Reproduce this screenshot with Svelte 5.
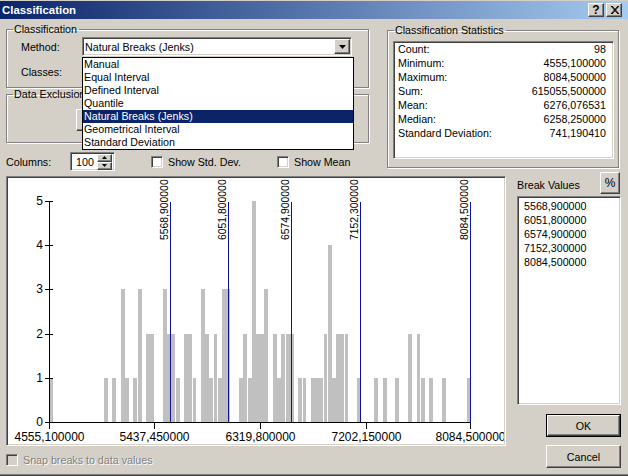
<script lang="ts">
	const methods = [
		'Manual',
		'Equal Interval',
		'Defined Interval',
		'Quantile',
		'Natural Breaks (Jenks)',
		'Geometrical Interval',
		'Standard Deviation'
	];
	const selected = 'Natural Breaks (Jenks)';

	const stats = [
		['Count:', '98'],
		['Minimum:', '4555,100000'],
		['Maximum:', '8084,500000'],
		['Sum:', '615055,500000'],
		['Mean:', '6276,076531'],
		['Median:', '6258,250000'],
		['Standard Deviation:', '741,190410']
	];

	const breaks = [
		{ label: '5568,900000', x: 170.5 },
		{ label: '6051,800000', x: 228.5 },
		{ label: '6574,900000', x: 291.5 },
		{ label: '7152,300000', x: 360.5 },
		{ label: '8084,500000', x: 470.5 }
	];

	const ticksX = [
		{ label: '4555,100000', x: 49.5 },
		{ label: '5437,450000', x: 154.5 },
		{ label: '6319,800000', x: 260.5 },
		{ label: '7202,150000', x: 366.5 },
		{ label: '8084,500000', x: 470.5 }
	];

	// [from x, to x, count] read off the histogram
	const bars = [
		[50, 53, 1], [104, 108, 1], [112, 116, 1], [121, 125, 3], [125, 129, 1], [133, 137, 1],
		[138, 142, 3], [146, 154, 2], [163, 167, 3], [167, 175, 2], [176, 180, 1], [184, 192, 2],
		[193, 196, 1], [201, 205, 3], [205, 209, 2], [209, 213, 1], [214, 217, 2], [218, 222, 1],
		[222, 230, 3], [239, 243, 1], [243, 247, 2], [248, 252, 1], [252, 256, 5], [256, 264, 2],
		[264, 268, 3], [273, 277, 2], [277, 281, 1], [281, 285, 2], [286, 294, 2], [298, 302, 1],
		[303, 306, 1], [311, 323, 1], [324, 327, 2], [328, 332, 4], [332, 336, 1], [336, 344, 2],
		[345, 348, 2], [357, 360, 1], [374, 378, 1], [383, 387, 1], [395, 399, 1], [408, 412, 2],
		[417, 420, 2], [421, 425, 1], [429, 433, 1], [442, 446, 1], [467, 471, 1]
	];

	const baseY = 422;
	const yFor = (n: number) => Math.round(baseY - n * 44.2);
</script>

<div class="window">
	<div class="titlebar">
		<span class="title">Classification</span>
		<div class="caption-buttons">
			<button class="caption-btn raised help">?</button>
			<button class="caption-btn raised" aria-label="Close">
				<svg width="9" height="8" viewBox="0 0 9 8">
					<path d="M1 0 L8 8 M2 0 L9 8 M8 0 L1 8 M9 0 L2 8" stroke="#000" stroke-width="1" />
				</svg>
			</button>
		</div>
	</div>

	<div class="content">
		<div class="top">
			<div class="top-left">
				<fieldset class="group class-group">
					<legend>Classification</legend>
					<div class="field">
						<span class="field-label">Method:</span>
						<div class="combo sunken">
							<span>{selected}</span>
							<span class="combo-arrow raised">
								<svg width="7" height="4" viewBox="0 0 7 4"><path d="M0 0 H7 L3.5 4 Z" fill="#000" /></svg>
							</span>
							<ul class="dropdown">
								{#each methods as m}
									<li class:active={m === selected}>{m}</li>
								{/each}
							</ul>
						</div>
					</div>
					<div class="field classes">
						<span class="field-label">Classes:</span>
					</div>
				</fieldset>

				<fieldset class="group excl-group">
					<legend>Data Exclusion</legend>
					<button class="raised excl-btn" aria-label="Exclusion"></button>
				</fieldset>

				<div class="columns-row">
					<span class="columns-label">Columns:</span>
					<div class="spinner sunken">
						<span class="spin-value">100</span>
						<div class="spin-btns">
							<span class="spin-btn raised">
								<svg width="5" height="3" viewBox="0 0 5 3"><path d="M2.5 0 L5 3 H0 Z" fill="#000" /></svg>
							</span>
							<span class="spin-btn raised">
								<svg width="5" height="3" viewBox="0 0 5 3"><path d="M0 0 H5 L2.5 3 Z" fill="#000" /></svg>
							</span>
						</div>
					</div>
					<label class="check std">
						<span class="box sunken"></span>
						Show Std. Dev.
					</label>
					<label class="check">
						<span class="box sunken"></span>
						Show Mean
					</label>
				</div>
			</div>

			<fieldset class="group stats-group">
				<legend>Classification Statistics</legend>
				<div class="stats sunken">
					{#each stats as [name, value]}
						<div class="stat-row">
							<span>{name}</span>
							<span>{value}</span>
						</div>
					{/each}
				</div>
			</fieldset>
		</div>

		<div class="main">
			<div class="main-left">
				<div class="chart sunken">
					<svg width="495" height="264" viewBox="9 179 495 264">
						{#each bars as [x0, x1, n]}
							<rect x={x0} y={yFor(n)} width={x1 - x0} height={baseY - yFor(n)} fill="#c0c0c0" />
						{/each}

						{#each breaks as b}
							<line x1={b.x} y1="202" x2={b.x} y2={baseY} stroke="#10109a" />
							<text class="chart-text break-text" transform="translate({b.x - 3} 240) rotate(-90)">{b.label}</text>
						{/each}

						<line x1="49.5" y1="201.5" x2="49.5" y2="429" stroke="#000" />
						<line x1="49" y1="422.5" x2="471" y2="422.5" stroke="#000" />

						{#each [0, 1, 2, 3, 4, 5] as n}
							<line x1="45" y1={yFor(n) + 0.5} x2="53" y2={yFor(n) + 0.5} stroke="#000" />
							<text class="chart-text" x="43" y={yFor(n) + 4} text-anchor="end">{n}</text>
						{/each}

						{#each ticksX as t}
							<line x1={t.x} y1="422" x2={t.x} y2="429" stroke="#000" />
							<text class="chart-text" x={t.x} y="441" text-anchor="middle">{t.label}</text>
						{/each}
					</svg>
				</div>
				<label class="check snap">
					<span class="box sunken disabled"></span>
					<span class="disabled-text">Snap breaks to data values</span>
				</label>
			</div>

			<div class="main-right">
				<div class="break-head">
					<span>Break Values</span>
					<button class="raised pct">%</button>
				</div>
				<div class="break-list sunken">
					{#each breaks as b}
						<div>{b.label}</div>
					{/each}
				</div>
				<button class="default-btn"><span class="raised">OK</span></button>
				<button class="raised cancel">Cancel</button>
			</div>
		</div>
	</div>
</div>

<style>
	:global(body) {
		margin: 0;
		background: #d4d0c8;
	}

	.window {
		width: 628px;
		height: 476px;
		box-sizing: border-box;
		padding-top: 1px;
		background: #d4d0c8;
		border-bottom: 1px solid #404040;
		box-shadow: inset 0 -1px 0 #808080;
		font-family: 'Liberation Sans', Arial, sans-serif;
		font-size: 10.7px;
		color: #000;
		overflow: hidden;
	}

	.raised {
		box-sizing: border-box;
		background: #d4d0c8;
		border: 1px solid;
		border-color: #fff #404040 #404040 #fff;
		box-shadow: inset -1px -1px 0 #808080;
	}

	.sunken {
		box-sizing: border-box;
		background: #fff;
		border: 1px solid;
		border-color: #808080 #fff #fff #808080;
		box-shadow: inset 1px 1px 0 #404040, inset -1px -1px 0 #d4d0c8;
	}

	button {
		font: inherit;
		color: inherit;
		padding: 0;
	}

	.titlebar {
		height: 18px;
		display: flex;
		align-items: center;
		justify-content: space-between;
		padding: 0 6px 0 2px;
		background: linear-gradient(to right, #0a246a, #a6caf0);
	}

	.title {
		color: #fff;
		font-weight: bold;
		font-size: 11.4px;
	}

	.caption-buttons {
		display: flex;
		gap: 2px;
	}

	.caption-btn {
		width: 16px;
		height: 14px;
		display: flex;
		align-items: center;
		justify-content: center;
	}

	.help {
		font-weight: bold;
		font-size: 12px;
	}

	.content {
		padding: 4px 8px 0 6px;
	}

	.top {
		display: flex;
		gap: 18px;
	}

	.top-left {
		width: 363px;
	}

	.group {
		margin: 0;
		padding: 0;
		box-sizing: border-box;
		border: 1px solid #808080;
		box-shadow: inset 1px 1px 0 #fff, 1px 1px 0 #fff;
	}

	legend {
		margin-left: 6px;
		padding: 0 2px 0 1px;
		line-height: 13px;
	}

	.class-group {
		height: 65px;
	}

	.field {
		display: flex;
		align-items: center;
		height: 19px;
		margin-top: 1px;
		padding-left: 14px;
	}

	.field-label {
		width: 61px;
	}

	.classes {
		margin-top: 6px;
	}

	.combo {
		position: relative;
		width: 270px;
		height: 19px;
		display: flex;
		align-items: center;
		padding-left: 2px;
	}

	.combo-arrow {
		position: absolute;
		right: 1px;
		top: 1px;
		width: 16px;
		height: 15px;
		display: flex;
		align-items: center;
		justify-content: center;
	}

	.dropdown {
		position: absolute;
		left: -1px;
		top: 19px;
		width: 272px;
		box-sizing: border-box;
		margin: 0;
		padding: 0;
		list-style: none;
		background: #fff;
		border: 1px solid #000;
		z-index: 2;
	}

	.dropdown li {
		height: 13px;
		line-height: 13px;
		padding-left: 1px;
	}

	.dropdown li.active {
		background: #0a246a;
		color: #fff;
	}

	.excl-group {
		height: 55px;
	}

	.excl-btn {
		display: block;
		width: 240px;
		height: 22px;
		margin: 8px 0 0 69px;
	}

	.columns-row {
		display: flex;
		align-items: center;
		height: 19px;
		margin-top: 9px;
	}

	.columns-label {
		width: 64px;
	}

	.spinner {
		width: 45px;
		height: 19px;
		display: flex;
		align-items: center;
		justify-content: space-between;
		padding: 0 2px 0 5px;
	}

	.spin-btns {
		display: flex;
		flex-direction: column;
	}

	.spin-btn {
		width: 15px;
		height: 8px;
		display: flex;
		align-items: center;
		justify-content: center;
	}

	.check {
		display: flex;
		align-items: center;
		gap: 5px;
		height: 13px;
	}

	.check.std {
		margin-left: 36px;
		width: 126px;
	}

	.box {
		display: block;
		width: 12px;
		height: 12px;
		flex: none;
	}

	.box.disabled {
		background: #d4d0c8;
	}

	.disabled-text {
		color: #808080;
		text-shadow: 1px 1px 0 #fff;
	}

	.stats-group {
		width: 232px;
		height: 144px;
		margin-top: 1px;
	}

	.stats {
		width: 221px;
		height: 118px;
		margin: 4px 0 0 5px;
		padding: 0 7px 0 4px;
	}

	.stat-row {
		display: flex;
		justify-content: space-between;
		height: 14px;
		line-height: 14px;
	}

	.main {
		display: flex;
		gap: 11px;
		margin-top: 1px;
	}

	.chart {
		width: 500px;
		height: 270px;
		margin-top: 4px;
		padding: 2px 1px 2px 2px;
		overflow: hidden;
	}

	.chart svg {
		display: block;
	}

	.chart-text {
		font-family: 'Liberation Sans', Arial, sans-serif;
		font-size: 12px;
		fill: #000;
	}

	.break-text {
		font-size: 10.4px;
	}

	.check.snap {
		margin-top: 7px;
	}

	.main-right {
		width: 104px;
		display: flex;
		flex-direction: column;
		align-items: flex-end;
	}

	.break-head {
		width: 100%;
		height: 22px;
		display: flex;
		align-items: center;
		justify-content: space-between;
		padding-top: 3px;
		box-sizing: border-box;
	}

	.pct {
		width: 20px;
		height: 22px;
		margin-top: -3px;
		margin-right: 1px;
		font-size: 12px;
	}

	.break-list {
		width: 104px;
		height: 209px;
		margin-top: 2px;
		padding: 2px 6px;
		line-height: 14px;
	}

	.default-btn {
		width: 75px;
		height: 23px;
		margin-top: 9px;
		border: 1px solid #000;
		background: #d4d0c8;
		display: flex;
	}

	.default-btn span {
		flex: 1;
		display: flex;
		align-items: center;
		justify-content: center;
	}

	.cancel {
		width: 75px;
		height: 23px;
		margin-top: 8px;
	}
</style>
